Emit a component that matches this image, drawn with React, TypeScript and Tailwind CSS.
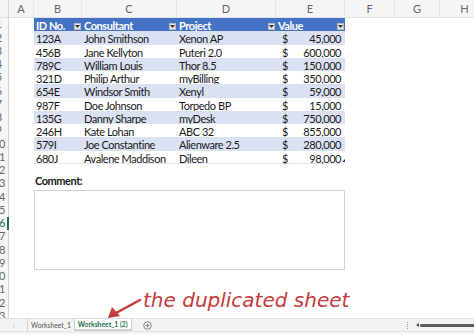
import React from "react";

const rows = [
  ["123A", "John Smithson", "Xenon AP", "45,000"],
  ["456B", "Jane Kellyton", "Puteri 2.0", "600,000"],
  ["789C", "William Louis", "Thor 8.5", "150,000"],
  ["321D", "Philip Arthur", "myBilling", "350,000"],
  ["654E", "Windsor Smith", "Xenyl", "59,000"],
  ["987F", "Doe Johnson", "Torpedo BP", "15,000"],
  ["135G", "Danny Sharpe", "myDesk", "750,000"],
  ["246H", "Kate Lohan", "ABC 32", "855,000"],
  ["579I", "Joe Constantine", "Alienware 2.5", "280,000"],
  ["680J", "Avalene Maddison", "Dileen", "98,000"],
];

const letters = ["A", "B", "C", "D", "E", "F", "G", "H"];

// little autofilter dropdown button
const Filter = () => (
  <span className="ml-auto mr-[1px] flex h-[7px] w-[7px] items-center justify-center bg-[#e9e9e9] border border-[#b9b9b9]">
    <svg width="5" height="3" viewBox="0 0 5 3">
      <path d="M0 0 L5 0 L2.5 3 Z" fill="#333" />
    </svg>
  </span>
);

const App = () => {
  return (
    <div className="w-[474px] h-[334px] overflow-hidden bg-white flex flex-col font-['Lato','Liberation_Sans',sans-serif] text-[11px] tracking-[-0.45px] text-[#1a1a1a]">
      {/* Column letters */}
      <div className="grid grid-cols-[9px_25px_48px_95px_99px_69px_50px_45px_50px] h-[18px] shrink-0 bg-[#f6f5f5] border-b border-[#e2e2e2] text-[#666] text-[11px] tracking-normal">
        <div className="border-r border-[#d8d8d8]" />
        {letters.map((l) => (
          <div key={l} className="flex items-center justify-center border-r border-[#e6e6e6] pt-[1px]">
            {l}
          </div>
        ))}
      </div>

      {/* Sheet body */}
      <div className="grid grid-cols-[9px_25px_48px_95px_99px_69px_50px_45px_50px] grid-rows-[repeat(23,13.25px)] flex-1 overflow-hidden">
        {/* Row numbers, header column is scrolled mostly out of view */}
        {Array.from({ length: 23 }, (_, i) => (
          <div
            key={i}
            style={{ gridRow: i + 1 }}
            className={`col-start-1 overflow-hidden bg-[#f6f6f6] ${
              i === 15 ? "border-r-2 border-[#217346]" : "border-r border-[#d8d8d8]"
            }`}
          >
            <div
              className={`-ml-[11px] w-[20px] h-full flex items-center justify-center text-[11px] tracking-normal ${
                i === 15 ? "text-[#217346]" : "text-[#666]"
              }`}
            >
              {i + 1}
            </div>
          </div>
        ))}

        {/* Table header */}
        <div className="col-start-3 col-span-4 row-start-1 grid grid-cols-[48px_95px_99px_69px] bg-[#4472c4] text-white font-bold">
          {["ID No.", "Consultant", "Project", "Value"].map((h) => (
            <div key={h} className="flex items-center pl-[2px]">
              <span>{h}</span>
              <Filter />
            </div>
          ))}
        </div>

        {/* Table rows */}
        {rows.map((r, i) => (
          <div
            key={r[0]}
            style={{ gridRow: i + 2 }}
            className={`col-start-3 col-span-4 grid grid-cols-[48px_95px_99px_69px] relative ${
              i % 2 === 0 ? "bg-[#d9e1f2]" : "bg-white"
            } ${i === rows.length - 1 ? "border-b border-[#dfe5f2]" : ""}`}
          >
            <div className="flex items-center pl-[2px]">{r[0]}</div>
            <div className="flex items-center pl-[2px]">{r[1]}</div>
            <div className="flex items-center pl-[2px]">{r[2]}</div>
            <div className="flex items-center pl-[6px] pr-[4px]">
              <span>$</span>
              <span className="ml-auto">{r[3]}</span>
            </div>
            {i === rows.length - 1 && (
              <span className="absolute right-0 bottom-[1px] w-0 h-0 border-l-[3px] border-l-transparent border-b-[3px] border-b-[#1f3f7a]" />
            )}
          </div>
        ))}

        {/* Comment */}
        <div className="col-start-3 row-start-13 flex items-end pl-[1px] pb-[1px] font-bold">Comment:</div>
        <div className="col-start-3 col-span-4 row-start-14 row-span-6 border border-[#d4d4d4]" />

        {/* Annotation overlay */}
        <div className="col-start-2 col-span-7 row-start-21 row-span-3 relative">
          <span className="absolute left-[134px] top-[7px] text-[#c43b3b] italic text-[20px] font-['DejaVu_Sans',sans-serif] leading-none whitespace-nowrap tracking-normal">
            the duplicated sheet
          </span>
          <svg className="absolute left-[95px] top-[12px]" width="40" height="28" viewBox="0 0 40 28">
            <path d="M36 5 L12 18" stroke="#c43b3b" strokeWidth="2.5" strokeLinecap="round" />
            <path d="M4 23 L8 12 L16 21 Z" fill="#c43b3b" />
          </svg>
        </div>
      </div>

      {/* Sheet tabs */}
      <div className="h-[13px] shrink-0 flex items-stretch bg-[#f3f3f3] border-t border-[#dcdcdc] text-[6.8px] text-[#555] tracking-normal">
        <div className="w-[27px] flex items-center justify-center text-[#aaa] text-[8px]">‹</div>
        <div className="px-[3px] flex items-center border-l border-[#d0d0d0]">Worksheet_1</div>
        <div className="px-[3px] flex items-center bg-white text-[#217346] font-bold border-b-2 border-[#217346] border-l border-r border-[#d0d0d0]">
          Worksheet_1 (2)
        </div>
        <div className="ml-[11px] flex items-center">
          <svg width="9" height="9" viewBox="0 0 9 9">
            <circle cx="4.5" cy="4.5" r="3.8" fill="none" stroke="#777" strokeWidth="0.9" />
            <path d="M4.5 2.5 V6.5 M2.5 4.5 H6.5" stroke="#777" strokeWidth="0.9" />
          </svg>
        </div>
        <div className="ml-auto flex items-center">
          <span className="w-[1px] h-[7px] border-l border-dotted border-[#999] mr-[8px]" />
          <span className="w-0 h-0 border-y-[2px] border-y-transparent border-r-[3px] border-r-[#555] mr-[1px]" />
          <span className="w-[54px] h-[3px] rounded-l-full bg-[#5a5a5a]" />
        </div>
      </div>
      <div className="h-[3px] shrink-0 bg-[#f3f3f3] border-t border-[#e4e4e4]" />
    </div>
  );
};

export default App;
